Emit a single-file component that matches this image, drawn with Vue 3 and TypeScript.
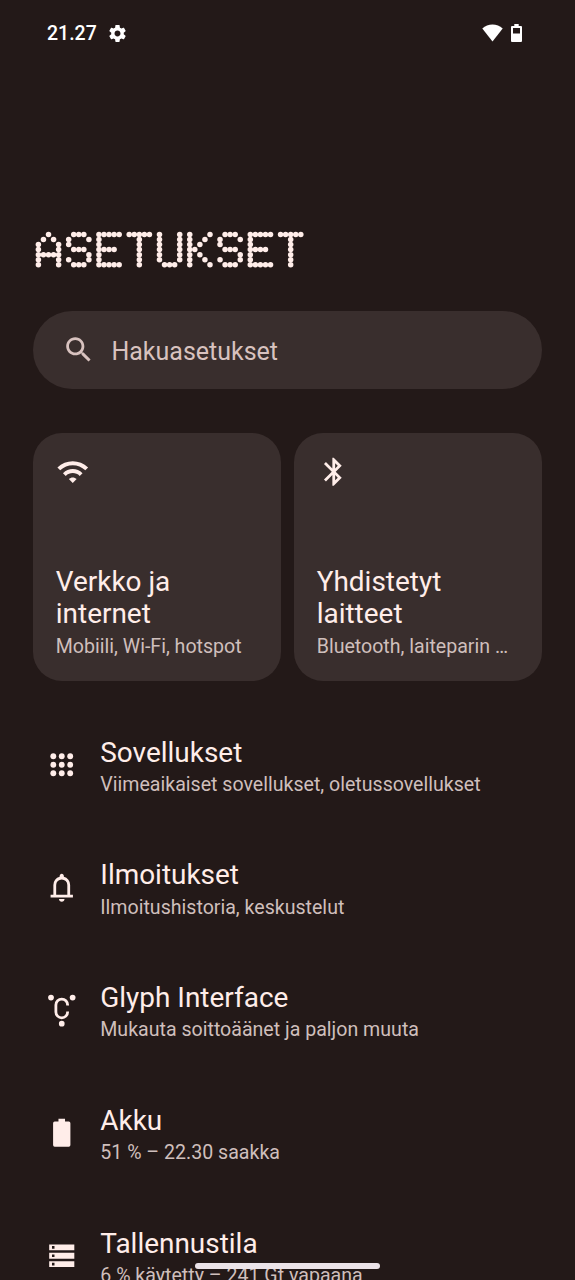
<script setup lang="ts">
interface Dot {
  x: number
  y: number
}

interface SettingRow {
  id: string
  title: string
  summary: string
}

interface Tile {
  id: string
  title: string
  summary: string
  icon: string
}

const heading = 'ASETUKSET'
const pitch = 5.06
const advance = 30.27

const matrix: Record<string, string[]> = {
  A: ['..#..', '.#.#.', '#...#', '#...#', '#####', '#...#', '#...#'],
  S: ['.###.', '#...#', '#....', '.###.', '....#', '#...#', '.###.'],
  E: ['#####', '#....', '#....', '####.', '#....', '#....', '#####'],
  T: ['#####', '..#..', '..#..', '..#..', '..#..', '..#..', '..#..'],
  U: ['#...#', '#...#', '#...#', '#...#', '#...#', '#...#', '.###.'],
  K: ['#...#', '#..#.', '#.#..', '##...', '#.#..', '#..#.', '#...#'],
}

const dots: Dot[] = heading.split('').flatMap((letter, index) =>
  matrix[letter].flatMap((line, row) =>
    line
      .split('')
      .map((cell, col) => ({ cell, x: 3.4 + index * advance + col * pitch, y: 3.4 + row * pitch }))
      .filter(({ cell }) => cell === '#')
      .map(({ x, y }) => ({ x, y })),
  ),
)

const tiles: Tile[] = [
  {
    id: 'network',
    title: 'Verkko ja internet',
    summary: 'Mobiili, Wi-Fi, hotspot',
    icon: 'M1 9l2 2c4.97-4.97 13.03-4.97 18 0l2-2C16.93 2.93 7.08 2.93 1 9zm8.2 8.2L12 20l2.8-2.8c-1.55-1.5-4.05-1.5-5.6 0zM5 13l2 2c2.76-2.76 7.24-2.76 10 0l2-2C15.14 9.14 8.87 9.14 5 13z',
  },
  {
    id: 'devices',
    title: 'Yhdistetyt laitteet',
    summary: 'Bluetooth, laiteparin …',
    icon: 'M17.71 7.71L12 2h-1v7.59L6.41 5 5 6.41 10.59 12 5 17.59 6.41 19 11 14.41V22h1l5.71-5.71-4.3-4.29 4.3-4.29zM13 5.83l1.88 1.88L13 9.59V5.83zm1.88 10.46L13 18.17v-3.76l1.88 1.88z',
  },
]

const rows: SettingRow[] = [
  { id: 'apps', title: 'Sovellukset', summary: 'Viimeaikaiset sovellukset, oletussovellukset' },
  { id: 'notifications', title: 'Ilmoitukset', summary: 'Ilmoitushistoria, keskustelut' },
  { id: 'glyph', title: 'Glyph Interface', summary: 'Mukauta soittoäänet ja paljon muuta' },
  { id: 'battery', title: 'Akku', summary: '51 % – 22.30 saakka' },
  { id: 'storage', title: 'Tallennustila', summary: '6 % käytetty – 241 Gt vapaana' },
]

const grid = [5.95, 12, 18.05]
const shelves = [3.9, 9.9, 15.9]
</script>

<template>
  <div class="screen">
    <header class="status">
      <div class="status-left">
        <span class="clock">21.27</span>
        <svg class="gear" viewBox="0 0 24 24" aria-hidden="true">
          <path
            d="M19.14 12.94c.04-.3.06-.61.06-.94 0-.32-.02-.64-.07-.94l2.03-1.58c.18-.14.23-.41.12-.61l-1.92-3.32c-.12-.22-.37-.29-.59-.22l-2.39.96c-.5-.38-1.03-.7-1.62-.94l-.36-2.54c-.04-.24-.24-.41-.48-.41h-3.84c-.24 0-.43.17-.47.41l-.36 2.54c-.59.24-1.13.57-1.62.94l-2.39-.96c-.22-.08-.47 0-.59.22L2.74 8.87c-.12.21-.08.47.12.61l2.03 1.58c-.05.3-.09.63-.09.94s.02.64.07.94l-2.03 1.58c-.18.14-.23.41-.12.61l1.92 3.32c.12.22.37.29.59.22l2.39-.96c.5.38 1.03.7 1.62.94l.36 2.54c.05.24.24.41.48.41h3.84c.24 0 .44-.17.47-.41l.36-2.54c.59-.24 1.13-.56 1.62-.94l2.39.96c.22.08.47 0 .59-.22l1.92-3.32c.12-.22.07-.47-.12-.61l-2.01-1.58zM12 15.4c-1.88 0-3.4-1.52-3.4-3.4s1.52-3.4 3.4-3.4 3.4 1.52 3.4 3.4-1.52 3.4-3.4 3.4z"
          />
        </svg>
      </div>
      <div class="status-right">
        <svg class="signal" viewBox="0 0 21 18" aria-hidden="true">
          <path d="M10.5 17.4L.3 4.6C3.2 2 6.6.5 10.5.5s7.3 1.5 10.2 4.1z" />
        </svg>
        <svg class="charge" viewBox="0 0 11 18" aria-hidden="true">
          <path
            fill-rule="evenodd"
            d="M3.3 0h4.4v2H10a1 1 0 0 1 1 1v14a1 1 0 0 1-1 1H1a1 1 0 0 1-1-1V3a1 1 0 0 1 1-1h2.3zM2 4v5.5h7V4z"
          />
        </svg>
      </div>
    </header>

    <h1 class="heading">
      <span class="heading-text">{{ heading }}</span>
      <svg class="heading-dots" viewBox="0 0 270 37" aria-hidden="true">
        <circle v-for="(dot, i) in dots" :key="i" :cx="dot.x" :cy="dot.y" r="2.75" />
      </svg>
    </h1>

    <div class="search">
      <svg class="icon" viewBox="0 0 24 24" aria-hidden="true">
        <path
          d="M15.5 14h-.79l-.28-.27C15.41 12.59 16 11.11 16 9.5 16 5.91 13.09 3 9.5 3S3 5.91 3 9.5 5.91 16 9.5 16c1.61 0 3.09-.59 4.23-1.57l.27.28v.79l5 4.99L20.49 19l-4.99-5zm-6 0C7.01 14 5 11.99 5 9.5S7.01 5 9.5 5 14 7.01 14 9.5 11.99 14 9.5 14z"
        />
      </svg>
      <span class="search-label">Hakuasetukset</span>
    </div>

    <section class="tiles">
      <article v-for="tile in tiles" :key="tile.id" class="tile">
        <svg class="icon" viewBox="0 0 24 24" aria-hidden="true"><path :d="tile.icon" /></svg>
        <div class="tile-text">
          <h2 class="title">{{ tile.title }}</h2>
          <p class="summary">{{ tile.summary }}</p>
        </div>
      </article>
    </section>

    <ul class="rows">
      <li v-for="row in rows" :key="row.id" class="row">
        <svg class="icon" viewBox="0 0 24 24" aria-hidden="true">
          <template v-if="row.id === 'apps'">
            <template v-for="y in grid" :key="y">
              <circle v-for="x in grid" :key="x" :cx="x" :cy="y" r="2.1" />
            </template>
          </template>
          <path
            v-else-if="row.id === 'notifications'"
            d="M4 19v-2h2v-7q0-2.075 1.25-3.688T10.5 4.2v-.7q0-.625.438-1.062T12 2t1.063.438T13.5 3.5v.7q2 .5 3.25 2.113T18 10v7h2v2zm8 3q-.825 0-1.412-.587T10 20h4q0 .825-.587 1.413T12 22m-4-5h8v-7q0-1.65-1.175-2.825T12 6T9.175 7.175T8 10z"
          />
          <template v-else-if="row.id === 'glyph'">
            <circle cx="4.3" cy="3.3" r="2.05" />
            <circle cx="19.8" cy="3.3" r="2.05" />
            <circle cx="12" cy="22" r="2.05" />
            <path
              class="stroke"
              d="M16.200 9V8.600a4.200 4.200 0 0 0-8.400 0v5a4.200 4.200 0 0 0 8.400 0v-.4"
            />
          </template>
          <path
            v-else-if="row.id === 'battery'"
            d="M9.650 2h4.700v2h2.700a1.150 1.150 0 0 1 1.150 1.150v15.700a1.150 1.150 0 0 1-1.150 1.150H6.950a1.150 1.150 0 0 1-1.150-1.150V5.150A1.150 1.150 0 0 1 6.950 4h2.700z"
          />
          <template v-else>
            <path
              v-for="y in shelves"
              :key="y"
              fill-rule="evenodd"
              :d="`M3 ${y}h18v4.200H3zM5 ${y + 1.2}v1.800h1.800v-1.800z`"
            />
          </template>
        </svg>
        <div class="row-text">
          <h2 class="title">{{ row.title }}</h2>
          <p class="summary">{{ row.summary }}</p>
        </div>
      </li>
    </ul>

    <div class="home-bar"></div>
  </div>
</template>

<style>
html,
body {
  background: #231918;
}
</style>

<style scoped>
.screen {
  position: relative;
  box-sizing: border-box;
  width: 575px;
  height: 1280px;
  padding: 0 33.4px;
  overflow: hidden;
  background: #231918;
  color: #ffede9;
  font-family: Roboto, 'Noto Sans', sans-serif;
}

svg {
  display: block;
  flex: none;
  fill: currentColor;
}

.status {
  display: flex;
  justify-content: space-between;
  align-items: center;
  height: 66px;
  padding: 0 19.600px 0 13.600px;
  color: #fff;
}

.status-left,
.status-right {
  display: flex;
  align-items: center;
}

.status-left {
  gap: 10.500px;
}

.status-right {
  gap: 8px;
}

.clock {
  padding-top: 1px;
  font-size: 19.500px;
  font-weight: 500;
  line-height: 24px;
}

.gear {
  width: 21px;
  height: 21px;
}

.signal {
  width: 21px;
  height: 18px;
}

.charge {
  width: 11px;
  height: 18px;
}

.heading {
  display: grid;
  width: 270px;
  height: 37px;
  margin: 165px 0 0 1.600px;
}

.heading-text,
.heading-dots {
  grid-area: 1 / 1;
}

.heading-text {
  color: transparent;
  font-size: 37px;
  font-weight: 400;
  line-height: 37px;
}

.heading-dots {
  width: 270px;
  height: 37px;
}

.search {
  display: flex;
  align-items: center;
  gap: 16px;
  height: 78px;
  margin-top: 43px;
  padding-left: 28.500px;
  border-radius: 39px;
  background: #392e2d;
  color: #d8c2bf;
}

.search-label {
  padding-top: 4px;
  font-size: 25px;
  line-height: 30px;
}

.icon {
  width: 33.500px;
  height: 33.500px;
}

.tiles {
  display: grid;
  grid-template-columns: 1fr 1fr;
  gap: 13.600px;
  margin-top: 44px;
}

.tile {
  display: flex;
  flex-direction: column;
  justify-content: space-between;
  box-sizing: border-box;
  height: 248px;
  padding: 22px 22.400px 22.600px;
  border-radius: 29px;
  background: #392e2d;
}

.tile-text .title {
  width: 150px;
}

.title {
  margin: 0;
  font-size: 27.950px;
  font-weight: 400;
  line-height: 32.700px;
}

.summary {
  margin: 4.400px 0 0;
  color: #cfbfbc;
  font-size: 19.580px;
  line-height: 22.900px;
  white-space: nowrap;
}

.rows {
  margin: 55.800px 0 0;
  padding: 0;
  list-style: none;
}

.row {
  display: flex;
  gap: 22px;
  height: 122.700px;
  padding-left: 11.400px;
}

.row .icon {
  margin-top: 11.200px;
}

.stroke {
  fill: none;
  stroke: currentColor;
  stroke-width: 2;
}

.home-bar {
  position: absolute;
  bottom: 11px;
  left: 195px;
  width: 184.500px;
  height: 5.600px;
  border-radius: 3px;
  background: #ebe3e8;
}
</style>
